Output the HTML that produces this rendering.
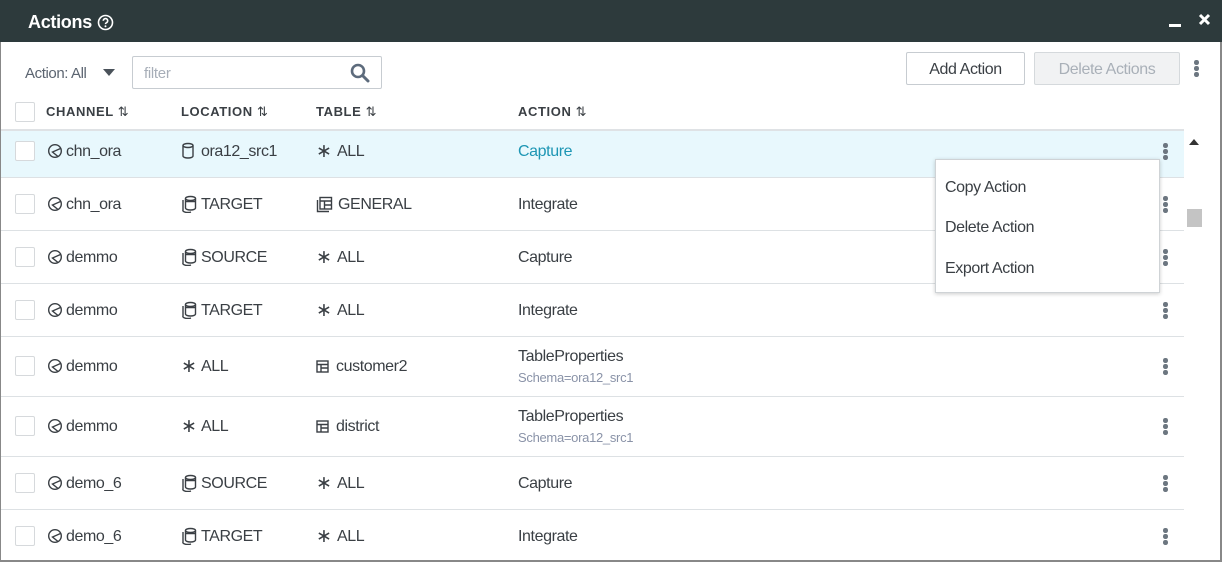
<!DOCTYPE html>
<html><head><meta charset="utf-8"><style>
*{box-sizing:border-box;margin:0;padding:0}
body{width:1222px;height:562px;overflow:hidden;background:#fff;font-family:"Liberation Sans",sans-serif;color:#3a3f44;position:relative}
.a{position:absolute;white-space:nowrap}
.hdr{left:0;top:0;width:1222px;height:42px;background:#2d3a3c}
.cb{position:absolute;left:15px;width:20px;height:20px;border:1px solid #d6d9dc;border-radius:2px;background:#fff}
.row{position:absolute;left:1px;width:1183px;border-bottom:1px solid #dde1e4}
.t{position:absolute;font-size:16px;letter-spacing:-0.4px;color:#3a3f44}
.th{position:absolute;top:104px;font-size:13px;font-weight:bold;letter-spacing:0.6px;color:#3a3f44}
.dots{position:absolute;left:1163px;width:5px}
.dots i{display:block;width:4.5px;height:4.5px;border-radius:50%;background:#6c7680;margin-bottom:1.5px}
svg{position:absolute}
.sub{position:absolute;font-size:13px;color:#8a93a8;letter-spacing:-0.3px}
</style></head><body>
<div class="a hdr"></div>
<div class="a" style="left:28px;top:12px;color:#fff;font-weight:bold;font-size:18px;letter-spacing:-0.3px">Actions</div>
<svg style="left:97px;top:14px" width="17" height="17" viewBox="0 0 17 17"><circle cx="8.5" cy="8.5" r="7" fill="none" stroke="#fff" stroke-width="1.6"/><path d="M6.3 6.8a2.2 2.2 0 1 1 3 2c-.6.3-.8.7-.8 1.3" fill="none" stroke="#fff" stroke-width="1.6"/><circle cx="8.5" cy="12.3" r="1" fill="#fff"/></svg>
<div class="a" style="left:1169px;top:24px;width:12px;height:3px;background:#fff"></div>
<svg style="left:1198px;top:13px" width="13" height="13" viewBox="0 0 13 13"><path d="M2 2L11 11M11 2L2 11" stroke="#fff" stroke-width="3"/></svg>
<div class="a" style="left:0;top:42px;width:1px;height:520px;background:#888"></div>
<div class="a" style="left:1220px;top:42px;width:2px;height:520px;background:#888"></div>
<div class="a" style="left:0;top:560px;width:1222px;height:2px;background:#888"></div>

<div class="a" style="left:25px;top:65px;font-size:15px;color:#5b6470;letter-spacing:-0.4px">Action: All</div>
<svg style="left:103px;top:69px" width="12" height="7"><path d="M0 0H12L6 7Z" fill="#4a525a"/></svg>
<div class="a" style="left:132px;top:56px;width:250px;height:33px;border:1px solid #c7ccd1;border-radius:2px"></div>
<div class="a" style="left:144px;top:65px;font-size:15px;color:#a7aeb8;letter-spacing:-0.3px">filter</div>
<svg style="left:350px;top:63px" width="20" height="20" viewBox="0 0 20 20"><circle cx="8" cy="8" r="6" fill="none" stroke="#5d6b7c" stroke-width="2.6"/><path d="M12.5 12.5L18 18" stroke="#5d6b7c" stroke-width="3" stroke-linecap="round"/></svg>
<div class="a" style="left:906px;top:52px;width:119px;height:33px;border:1px solid #c7ccd1;border-radius:2px;font-size:16px;letter-spacing:-0.4px;text-align:center;line-height:33px;color:#3a3f44">Add Action</div>
<div class="a" style="left:1034px;top:52px;width:146px;height:33px;border:1px solid #d5d9dc;background:#f1f2f3;border-radius:2px;font-size:16px;letter-spacing:-0.4px;text-align:center;line-height:33px;color:#a9b0b8">Delete Actions</div>
<div class="dots" style="left:1194px;top:60px"><i></i><i></i><i></i></div>

<div class="cb" style="top:102px"></div>
<div class="th" style="left:46px">CHANNEL <span style="font-weight:normal">⇅</span></div>
<div class="th" style="left:181px">LOCATION <span style="font-weight:normal">⇅</span></div>
<div class="th" style="left:316px">TABLE <span style="font-weight:normal">⇅</span></div>
<div class="th" style="left:518px">ACTION <span style="font-weight:normal">⇅</span></div>
<div class="a" style="left:1px;top:129px;width:1183px;height:2px;background:#dfe2e5"></div>

<div class="row" style="top:131px;height:47px;background:#e8f8fd"></div>
<div class="row" style="top:178px;height:53px"></div>
<div class="row" style="top:231px;height:53px"></div>
<div class="row" style="top:284px;height:53px"></div>
<div class="row" style="top:337px;height:60px"></div>
<div class="row" style="top:397px;height:60px"></div>
<div class="row" style="top:457px;height:53px"></div>

<div class="a" style="left:1185px;top:131px;width:35px;height:429px;background:#fff"></div>
<svg style="left:1189px;top:139px" width="10" height="6"><path d="M0 6L5 0L10 6Z" fill="#333"/></svg>
<div class="a" style="left:1187px;top:209px;width:15px;height:18px;background:#c4c4c4"></div>

<div id="rows"></div>
<script>
var rows=[
[151,'chn_ora','db','ora12_src1','ast','ALL','Capture',null,1],
[204,'chn_ora','dbs','TARGET','tbls','GENERAL','Integrate'],
[257,'demmo','dbs','SOURCE','ast','ALL','Capture'],
[310,'demmo','dbs','TARGET','ast','ALL','Integrate'],
[366,'demmo','ast','ALL','tbl','customer2','TableProperties','Schema=ora12_src1'],
[426,'demmo','ast','ALL','tbl','district','TableProperties','Schema=ora12_src1'],
[483,'demo_6','dbs','SOURCE','ast','ALL','Capture'],
[536,'demo_6','dbs','TARGET','ast','ALL','Integrate']];
function icon(k,x,y){
 var s='stroke="#3a3f44" stroke-width="1.4" fill="none"';
 if(k=='ch')return '<svg style="left:'+x+'px;top:'+(y-8)+'px" width="16" height="16"><circle cx="8" cy="8" r="6.3" '+s+'/><path d="M13.5 5.5L5.5 9L11 13.5" '+s+'/></svg>';
 if(k=='db')return '<svg style="left:'+x+'px;top:'+(y-9)+'px" width="14" height="18"><ellipse cx="7" cy="3.5" rx="5" ry="2" '+s+'/><path d="M2 3.5V14a5 2 0 0 0 10 0V3.5" '+s+'/></svg>';
 if(k=='dbs')return '<svg style="left:'+x+'px;top:'+(y-9)+'px" width="17" height="18"><ellipse cx="9.5" cy="3.5" rx="5" ry="2" '+s+'/><path d="M4.5 3.5V13a5 2 0 0 0 10 0V3.5M4.5 6.5H14.5" '+s+'/><path d="M2 5V15a5 2 0 0 0 8 2" '+s+'/></svg>';
 if(k=='ast')return '<div class="t" style="left:'+x+'px;top:'+(y-11)+'px;font-size:19px">∗</div>';
 if(k=='tbl')return '<svg style="left:'+x+'px;top:'+(y-6)+'px" width="13" height="13"><rect x="1" y="1" width="11" height="11" '+s+'/><path d="M1 4.5H12M5 4.5V12M5 8H12" '+s+'/></svg>';
 if(k=='tbls')return '<svg style="left:'+x+'px;top:'+(y-8)+'px" width="17" height="17"><rect x="4" y="1.5" width="11.5" height="11.5" '+s+'/><path d="M4 5H15.5M8.5 5V13M8.5 9H15.5M1.5 4V15.5H13" '+s+'/></svg>';
}
var h='';
rows.forEach(function(r){
 var y=r[0];
 h+='<div class="cb" style="top:'+(y-10)+'px"></div>';
 h+=icon('ch',47,y)+'<div class="t" style="left:66px;top:'+(y-8)+'px">'+r[1]+'</div>';
 h+=icon(r[2],181,y)+'<div class="t" style="left:201px;top:'+(y-8)+'px">'+r[3]+'</div>';
 h+=icon(r[4],316,y)+'<div class="t" style="left:'+(r[4]=='tbls'?338:(r[4]=='tbl'?336:337))+'px;top:'+(y-8)+'px">'+r[5]+'</div>';
 if(r[7]){h+='<div class="t" style="left:518px;top:'+(y-18)+'px">'+r[6]+'</div><div class="sub" style="left:518px;top:'+(y+4)+'px">'+r[7]+'</div>';}
 else h+='<div class="t" style="left:518px;top:'+(y-8)+'px;'+(r[8]?'color:#1d96b4':'')+'">'+r[6]+'</div>';
 h+='<div class="dots" style="top:'+(y-8)+'px"><i></i><i></i><i></i></div>';
});
document.getElementById('rows').innerHTML=h;
</script>

<div class="a" style="left:935px;top:159px;width:225px;height:134px;background:#fff;border:1px solid #cfd3d6;box-shadow:0 1px 4px rgba(0,0,0,0.2)"></div>
<div class="t" style="left:945px;top:179px">Copy Action</div>
<div class="t" style="left:945px;top:219px">Delete Action</div>
<div class="t" style="left:945px;top:260px">Export Action</div>
</body></html>
